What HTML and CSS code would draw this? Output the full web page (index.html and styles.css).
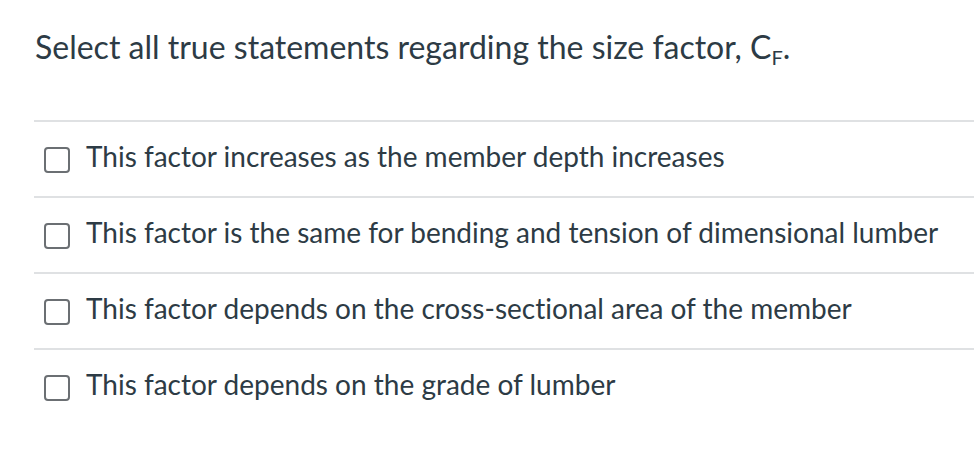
FILE: index.html
```html
<!DOCTYPE html>
<html>
<head>
<meta charset="utf-8">
<link rel="stylesheet" href="styles.css">
</head>
<body>
<div class="question">
  <p class="prompt">Select all true statements regarding the size factor, C<sub>F</sub>.</p>
  <div class="answers">
    <label class="answer"><span class="box"></span><span class="text">This factor increases as the member depth increases</span></label>
    <label class="answer"><span class="box"></span><span class="text">This factor is the same for bending and tension of dimensional lumber</span></label>
    <label class="answer"><span class="box"></span><span class="text">This factor depends on the cross-sectional area of the member</span></label>
    <label class="answer"><span class="box"></span><span class="text">This factor depends on the grade of lumber</span></label>
  </div>
</div>
</body>
</html>
```
FILE: styles.css
```css
html, body {
  margin: 0;
  padding: 0;
  background: #fff;
}
body {
  font-family: Lato, "Open Sans", sans-serif;
  color: #2d3b45;
  font-variant-ligatures: none;
}
.question {
  padding: 27px 0 0 34px;
}
.prompt {
  margin: 0 0 0 1px;
  font-size: 32px;
  line-height: 40px;
}
.prompt sub {
  font-size: 20px;
  vertical-align: -6px;
  line-height: 0;
}
.answers {
  margin-top: 53px;
}
.answer {
  display: flex;
  align-items: center;
  gap: 16px;
  height: 74px;
  padding-left: 10px;
  border-top: 2px solid #dfe1e3;
  font-size: 28px;
}
.text {
  padding-bottom: 7px;
}
.box {
  width: 22px;
  height: 22px;
  border: 2px solid #6b6f73;
  border-radius: 4px;
  flex: none;
  margin-top: 2px;
}
```
